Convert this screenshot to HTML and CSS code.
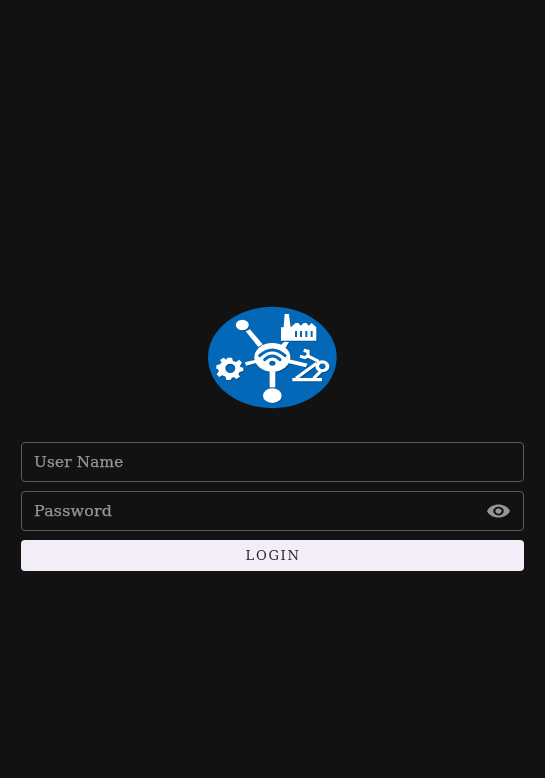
FILE: index.html
```html
<!DOCTYPE html>
<html lang="en">
<head>
<meta charset="utf-8">
<title>Login</title>
<link rel="stylesheet" href="styles.css">
</head>
<body>
<main class="login">
  <svg class="logo" viewBox="0 0 435 345" aria-hidden="true">
    <ellipse cx="217" cy="172.500" rx="193" ry="152" fill="#0468b9"/>
    <g class="shade" transform="translate(3 3)">
      <use href="#shapes"/>
    </g>
    <g id="shapes" class="shapes">
      <ellipse cx="127" cy="75" rx="19.500" ry="16"/>
      <path d="M137 94L150 88L188 133L175 141Z"/>
      <path d="M135 187L169 179L171 188L138 197Z"/>
      <path d="M209 210H226V262H209Z"/>
      <ellipse cx="217" cy="287" rx="28" ry="22"/>
      <path d="M242 136L253 125L267 126L257 143Z"/>
      <path d="M267 178L323 191L317 202L264 189Z"/>
      <ellipse cx="217" cy="172" rx="54" ry="43"/>
      <path d="M243 122V82H251L254 42H267L272 82L287 69H295L302 77L311 69H319L326 77L335 69L349 82V122Z"/>
      <path fill-rule="evenodd" d="M82 173H96L99 183L108 186L118 179L126 188L120 197L122 202L130 203V213L119 216L115 222L120 230L109 237L101 231L95 234L92 240H79L77 230L67 226L58 231L50 223L57 213L53 207L49 206V196L60 193L65 187L60 180L71 173L79 179ZM91 191A15 14 0 1 0 91 219A15 14 0 1 0 91 191Z"/>
      <path class="arm" d="M311 151L324 154V168L315 173L300 169M326 169L356 184M350 190L288 235M362 214L341 235M277 239H366"/>
      <ellipse cx="367" cy="199" rx="21" ry="18"/>
    </g>
    <g class="cut">
      <path d="M285 93H291V111H285ZM300 93H306V111H300ZM316 93H322V111H316ZM332 93H338V111H332Z"/>
      <ellipse cx="367" cy="199" rx="9.500" ry="8.500"/>
      <ellipse cx="217" cy="190" rx="9.500" ry="7.500"/>
    </g>
    <path class="waves" d="M179 167Q217 133 255 167M194 179Q217 157 240 179"/>
  </svg>
  <form class="form">
    <div class="field"><span class="label">User Name</span></div>
    <div class="field"><span class="label password">Password</span>
      <svg class="eye" viewBox="1 4 22 16" preserveAspectRatio="none" aria-hidden="true"><path d="M12 4.500C7 4.500 2.730 7.610 1 12c1.730 4.390 6 7.500 11 7.500s9.270-3.110 11-7.500c-1.730-4.390-6-7.500-11-7.500zM12 17c-2.760 0-5-2.240-5-5s2.240-5 5-5 5 2.240 5 5-2.240 5-5 5zm0-8c-1.660 0-3 1.340-3 3s1.340 3 3 3 3-1.340 3-3-1.340-3-3-3z"/></svg>
    </div>
    <button class="submit" type="button"><span class="caption">LOGIN</span></button>
  </form>
</main>
</body>
</html>
```
FILE: styles.css
```css
* { box-sizing: border-box; }
body { margin: 0; background: #121212; font-family: "DejaVu Serif", serif; }
.login { height: 778px; padding: 300px 21px 0; display: flex; flex-direction: column; align-items: center; overflow: hidden; }
.logo { width: 145px; height: 115px; flex: none; }
.shapes { fill: #fff; }
.arm { fill: none; stroke: #fff; stroke-width: 9.500; }
.shade { opacity: .2; filter: brightness(0); }
.cut { fill: #0468b9; }
.waves { fill: none; stroke: #0468b9; stroke-width: 9; stroke-linecap: round; }
.form { width: 100%; margin-top: 27px; display: flex; flex-direction: column; }
.field { height: 40px; margin-bottom: 8.500px; padding: 0 13px 0 12px; border: 1px solid #5c5c5c; border-radius: 4px; display: flex; align-items: center; justify-content: space-between; color: #969696; }
.label { font-size: 14px; line-height: 20px; letter-spacing: .2px; transform: scaleX(1.085); transform-origin: left; -webkit-text-stroke: .25px currentColor; }
.password { transform: scaleX(1.13); }
.eye { width: 23px; height: 14px; fill: #969696; }
.submit { height: 31px; margin-top: .500px; padding: 2px 0 0 2px; border: 0; border-radius: 4px; background: #f3edf7; color: #29252e; font-family: inherit; font-size: 12px; letter-spacing: 1.500px; }
.caption { display: inline-block; transform: scaleX(1.1); }
```
